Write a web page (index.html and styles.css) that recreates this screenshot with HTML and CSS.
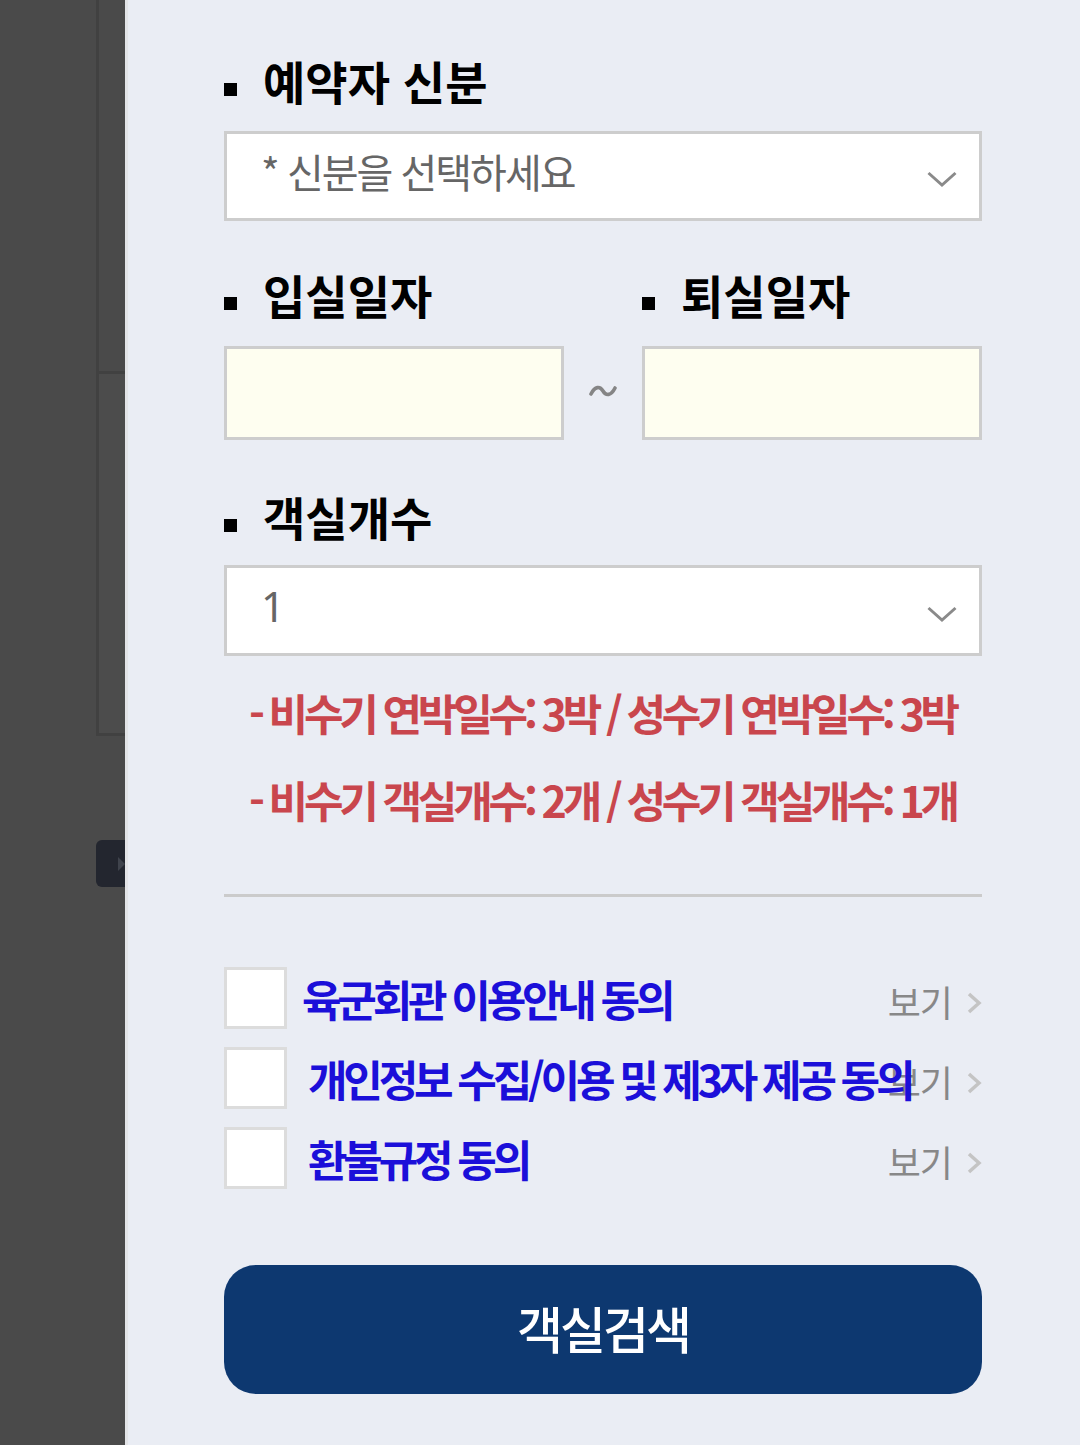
FILE: index.html
```html
<!DOCTYPE html>
<html lang="ko">
<head>
<meta charset="utf-8">
<title>객실검색</title>
<link rel="stylesheet" href="styles.css">
</head>
<body>
<div class="screen">
  <aside class="backdrop">
    <div class="ghost-box">
      <div class="ghost-top"></div>
      <div class="ghost-bottom"></div>
    </div>
    <div class="ghost-tab"><span class="ghost-tri"></span></div>
  </aside>
  <main class="panel">
    <section class="field">
      <h2 class="label"><span class="sq"></span><span>예약자 신분</span></h2>
      <div class="select">
        <span class="select-text">* 신분을 선택하세요</span>
        <svg class="chev" width="30" height="16" viewBox="0 0 30 16"><polyline points="1.5,2 15,14 28.5,2" fill="none" stroke="#8a8a8a" stroke-width="3"/></svg>
      </div>
    </section>

    <section class="dates">
      <div class="date-col">
        <h2 class="label"><span class="sq"></span><span>입실일자</span></h2>
        <div class="date-input"></div>
      </div>
      <div class="tilde-col">
        <svg class="tilde" width="28" height="14" viewBox="0 0 28 14"><path d="M2 10 C6 2, 11 2, 14 7 S22 12, 26 4" fill="none" stroke="#858585" stroke-width="3.6" stroke-linecap="round"/></svg>
      </div>
      <div class="date-col">
        <h2 class="label"><span class="sq"></span><span>퇴실일자</span></h2>
        <div class="date-input"></div>
      </div>
    </section>

    <section class="field field-rooms">
      <h2 class="label label-rooms"><span class="sq"></span><span>객실개수</span></h2>
      <div class="select select-rooms">
        <span class="select-text select-num">1</span>
        <svg class="chev" width="30" height="16" viewBox="0 0 30 16"><polyline points="1.5,2 15,14 28.5,2" fill="none" stroke="#8a8a8a" stroke-width="3"/></svg>
      </div>
    </section>

    <div class="notes">
      <p class="note">- 비수기 연박일수: 3박 / 성수기 연박일수: 3박</p>
      <p class="note">- 비수기 객실개수: 2개 / 성수기 객실개수: 1개</p>
    </div>

    <hr class="divider">

    <ul class="agrees">
      <li class="agree">
        <span class="check"></span>
        <span class="agree-text agree-first">육군회관 이용안내 동의</span>
        <span class="view">보기<svg class="arrow" width="16" height="26" viewBox="0 0 16 26"><polyline points="3,4 13,13 3,22" fill="none" stroke="#c4c4c4" stroke-width="3.5"/></svg></span>
      </li>
      <li class="agree">
        <span class="check"></span>
        <span class="agree-text">개인정보 수집/이용 및 제3자 제공 동의</span>
        <span class="view">보기<svg class="arrow" width="16" height="26" viewBox="0 0 16 26"><polyline points="3,4 13,13 3,22" fill="none" stroke="#c4c4c4" stroke-width="3.5"/></svg></span>
      </li>
      <li class="agree">
        <span class="check"></span>
        <span class="agree-text">환불규정 동의</span>
        <span class="view">보기<svg class="arrow" width="16" height="26" viewBox="0 0 16 26"><polyline points="3,4 13,13 3,22" fill="none" stroke="#c4c4c4" stroke-width="3.5"/></svg></span>
      </li>
    </ul>

    <button class="search" type="button">객실검색</button>
  </main>
</div>
</body>
</html>
```

FILE: styles.css
```css
* { box-sizing: border-box; }
html, body { margin: 0; padding: 0; }
body {
  font-family: "Noto Sans CJK KR", "Noto Sans", sans-serif;
  background: #eaedf4;
}
.screen {
  display: flex;
  width: 1080px;
  height: 1445px;
  overflow: hidden;
}
.backdrop {
  width: 125px;
  flex: none;
  background: #4a4a4a;
  padding-left: 96px;
  display: flex;
  flex-direction: column;
}
.ghost-box {
  height: 736px;
  border-left: 3px solid #414141;
  border-bottom: 3px solid #414141;
  display: flex;
  flex-direction: column;
}
.ghost-top {
  height: 374px;
  border-bottom: 3px solid #414141;
}
.ghost-bottom { flex: 1; background: #4c4c4c; }
.ghost-tab {
  margin-top: 104px;
  height: 47px;
  width: 29px;
  background: #23262f;
  border-radius: 6px 0 0 6px;
  display: flex;
  align-items: center;
  justify-content: flex-end;
}
.ghost-tri {
  width: 0; height: 0;
  border-top: 7px solid transparent;
  border-bottom: 7px solid transparent;
  border-left: 7px solid #3f434c;
}
.panel {
  flex: 1;
  min-width: 0;
  border-left: 3px solid #e3e4e7;
  background: #eaedf4;
  padding: 55px 98px 0 96px;
  display: flex;
  flex-direction: column;
}
.label {
  margin: 0;
  display: flex;
  align-items: flex-start;
  height: 50px;
  line-height: 50px;
  font-size: 46px;
  font-weight: 700;
  color: #000;
  letter-spacing: 0;
  white-space: nowrap;
}
.sq {
  width: 13px;
  height: 13px;
  background: #000;
  margin-top: 28px;
  margin-right: 26px;
  flex: none;
}
.select {
  margin-top: 26px;
  height: 90px;
  background: #fff;
  border: 3px solid #cdcdcd;
  display: flex;
  align-items: center;
  padding: 0 22px 0 34px;
}
.select-text {
  flex: 1;
  font-size: 40px;
  color: #666;
  letter-spacing: -2px;
  line-height: 1;
  margin-top: -10px;
}
.select-num { font-family: "Noto Sans", sans-serif; font-size: 42px; margin-top: -10px; }
.chev { flex: none; margin-top: 6px; }
.dates {
  margin-top: 48px;
  display: flex;
}
.date-col {
  width: 340px;
  flex: none;
  display: flex;
  flex-direction: column;
}
.date-input {
  margin-top: 27px;
  height: 94px;
  background: #fefef0;
  border: 3px solid #cdcdcd;
}
.tilde-col {
  flex: 1;
  display: flex;
  justify-content: center;
  padding-top: 115px;
}
.field-rooms { margin-top: 51px; }
.select-rooms { margin-top: 24px; height: 91px; }
.notes { margin-top: 13px; }
.note {
  margin: 0;
  height: 87px;
  line-height: 87px;
  padding-left: 25px;
  font-size: 43px;
  font-weight: 700;
  color: #c9464d;
  letter-spacing: -4.2px;
  white-space: nowrap;
}
.divider {
  margin: 51px 0 0;
  border: 0;
  height: 3px;
  background: #cbcbcb;
}
.agrees {
  list-style: none;
  margin: 70px 0 0;
  padding: 0;
  display: flex;
  flex-direction: column;
  gap: 18px;
}
.agree {
  display: flex;
  align-items: center;
  height: 62px;
}
.check {
  width: 63px;
  height: 62px;
  flex: none;
  background: #fff;
  border: 3px solid #dcdcdc;
}
.agree-text {
  flex: 1;
  min-width: 0;
  margin-left: 21px;
  font-size: 43px;
  font-weight: 700;
  color: #1b0fd9;
  letter-spacing: -4.2px;
  white-space: nowrap;
  position: relative;
  z-index: 1;
  line-height: 1;
}
.agree-first { margin-left: 15px; }
.view {
  flex: none;
  display: flex;
  align-items: center;
  font-size: 36px;
  color: #888;
  letter-spacing: -1px;
  line-height: 1;
  margin-top: 6px;
}
.arrow { margin-left: 14px; margin-top: 4px; }
.search {
  margin-top: 76px;
  height: 129px;
  width: 100%;
  border: 0;
  border-radius: 32px;
  background: #0d3870;
  color: #fff;
  font-family: "Noto Sans CJK KR", sans-serif;
  font-size: 50px;
  font-weight: 500;
  letter-spacing: -3px;
  padding: 0 0 6px;
}
```
